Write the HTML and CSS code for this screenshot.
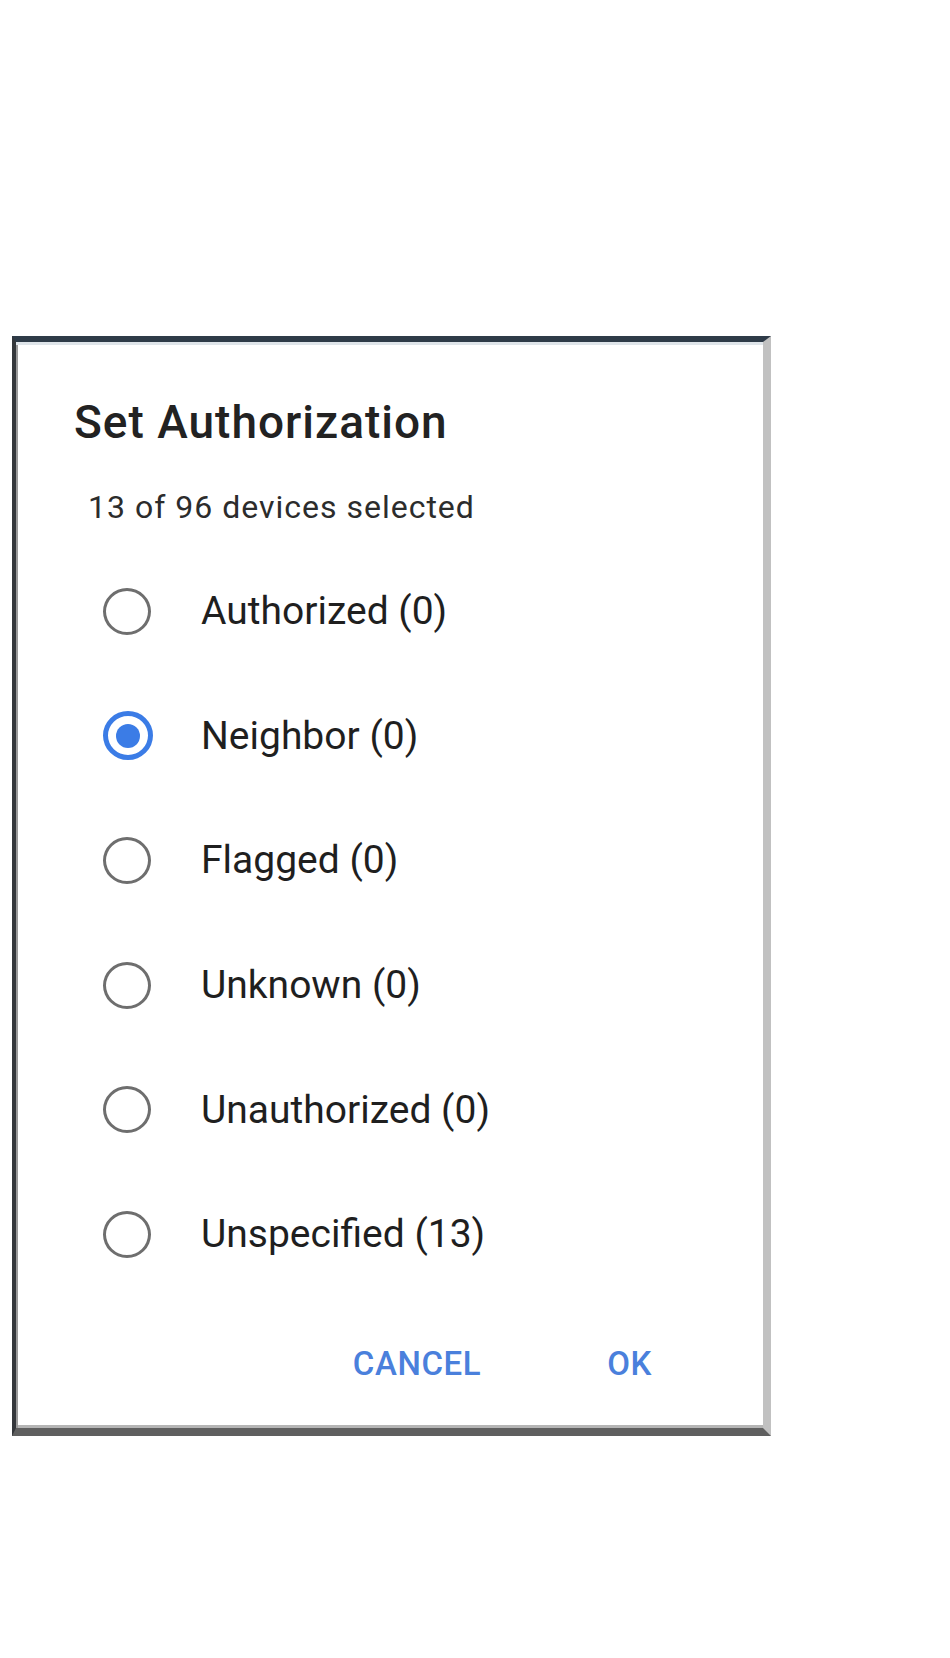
FILE: index.html
```html
<!DOCTYPE html>
<html lang="en">
<head>
<meta charset="utf-8">
<title>Set Authorization</title>
<link rel="stylesheet" href="styles.css">
</head>
<body>
<div class="dialog">
  <h1 class="title">Set Authorization</h1>
  <p class="subtitle">13 of 96 devices selected</p>
  <ul class="options">
    <li class="option"><span class="radio"></span><span class="label">Authorized (0)</span></li>
    <li class="option"><span class="radio radio-on"><span class="dot"></span></span><span class="label">Neighbor (0)</span></li>
    <li class="option"><span class="radio"></span><span class="label">Flagged (0)</span></li>
    <li class="option"><span class="radio"></span><span class="label">Unknown (0)</span></li>
    <li class="option"><span class="radio"></span><span class="label">Unauthorized (0)</span></li>
    <li class="option"><span class="radio"></span><span class="label">Unspecified (13)</span></li>
  </ul>
  <div class="actions">
    <button class="btn">CANCEL</button>
    <button class="btn">OK</button>
  </div>
</div>
</body>
</html>
```

FILE: styles.css
```css
html, body {
  margin: 0;
  padding: 0;
  background: #ffffff;
}

body {
  font-family: Roboto, "Liberation Sans", Arial, sans-serif;
  color: #212121;
  padding-top: 336px;
  padding-left: 12px;
}

.dialog {
  box-sizing: border-box;
  width: 759px;
  height: 1100px;
  background: #ffffff;
  border-top: 6px solid #2e3b48;
  border-left: 4px solid #34373b;
  border-right: 8px solid #c1c1c1;
  border-bottom: 8px solid #5f5f5f;
  box-shadow: inset 0 3px 0 #dfe5ea, inset 2px 0 0 #9a9a9a, inset 0 -3px 0 #b5b5b5;
  padding: 53px 0 0 0;
}

.title {
  margin: 0;
  padding-left: 58px;
  font-size: 46px;
  line-height: 54px;
  font-weight: 500;
  letter-spacing: 1px;
  color: #222222;
}

.subtitle {
  margin: 38px 0 0 0;
  padding-left: 72px;
  font-size: 32px;
  line-height: 40px;
  letter-spacing: 1px;
  color: #2c2c2c;
}

.options {
  list-style: none;
  margin: 22px 0 0 0;
  padding: 0;
}

.option {
  display: flex;
  align-items: center;
  height: 124.6px;
  padding-left: 87px;
}

.radio {
  box-sizing: border-box;
  width: 48px;
  height: 47px;
  border-radius: 50%;
  border: 3px solid #6e6e6e;
  flex: none;
  display: flex;
  align-items: center;
  justify-content: center;
}

.radio-on {
  width: 50px;
  height: 49px;
  border: 5px solid #3b7ce6;
}

.dot {
  width: 24px;
  height: 24px;
  border-radius: 50%;
  background: #3b7ce6;
}

.label {
  margin-left: 50px;
  font-size: 39px;
  line-height: 46px;
  color: #1f1f1f;
}

.radio-on + .label {
  margin-left: 48px;
}

.actions {
  display: flex;
  justify-content: flex-end;
  gap: 126px;
  margin-top: 47px;
  padding-right: 111px;
}

.btn {
  border: 0;
  background: transparent;
  padding: 0;
  font-family: Roboto, "Liberation Sans", Arial, sans-serif;
  font-size: 33px;
  line-height: 40px;
  font-weight: 500;
  letter-spacing: 0.6px;
  color: #4a80dc;
}
```
